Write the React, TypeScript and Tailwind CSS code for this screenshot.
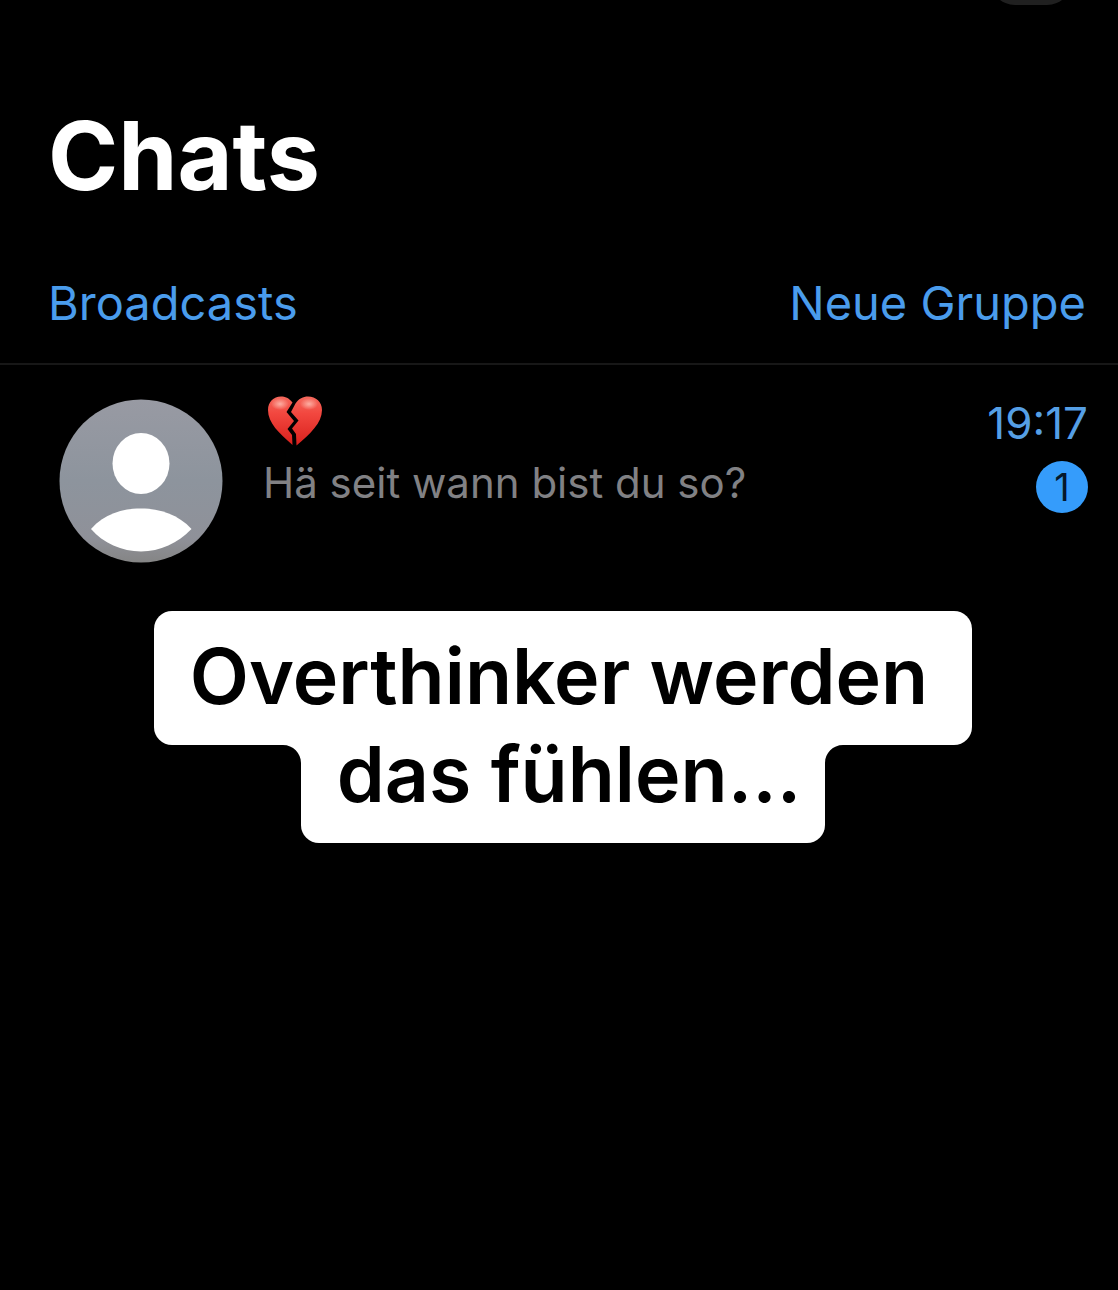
interface Chat {
  id: number;
  message: string;
  time: string;
  unread: number;
}

const chats: Chat[] = [
  { id: 1, message: 'Hä seit wann bist du so?', time: '19:17', unread: 1 },
];

function Avatar() {
  return (
    <svg viewBox="0 0 164 164" className="mt-1 h-41 w-41 shrink-0" aria-hidden="true">
      <defs>
        <linearGradient id="avatar-bg" x1="0" y1="0" x2="0" y2="1">
          <stop offset="0" stopColor="#989aa3" />
          <stop offset="0.5" stopColor="#8d949d" />
          <stop offset="0.85" stopColor="#8f9199" />
          <stop offset="1" stopColor="#858585" />
        </linearGradient>
      </defs>
      <circle cx="82" cy="82" r="81.5" fill="url(#avatar-bg)" />
      <ellipse cx="82" cy="64.5" rx="28.5" ry="30.5" fill="#fff" />
      <path d="M32 130C45 115 63 109.5 82 109.5C101 109.5 120 116 132.5 130C119 144 101 152.5 82 152.5C63 152.5 44 144 32 130Z" fill="#fff" />
    </svg>
  );
}

function BrokenHeart() {
  return (
    <svg viewBox="0 0 56 52" className="ml-1 h-13 w-14" aria-hidden="true">
      <defs>
        <linearGradient id="heart-fill" x1="0" y1="0" x2="0" y2="1">
          <stop offset="0" stopColor="#f5685c" />
          <stop offset="0.35" stopColor="#f2473f" />
          <stop offset="1" stopColor="#d9201c" />
        </linearGradient>
        <radialGradient id="heart-shine">
          <stop offset="0" stopColor="#ffc4b8" stopOpacity="0.8" />
          <stop offset="1" stopColor="#ffc4b8" stopOpacity="0" />
        </radialGradient>
      </defs>
      <path
        d="M25.5 7.5C22 3 18 1.5 14 1.5C6.5 1.5 1 7 1 15C1 28 12 38 25.5 50L25 40L20.5 34L27 26L19.5 17Z"
        fill="url(#heart-fill)"
      />
      <path
        d="M28.5 8.5C32 3.5 36 1.5 41 1.5C49 1.5 55 7 55 15C55 28 43 39 29.5 50.5L29 39L25 33.5L31.5 25.5L24 17Z"
        fill="url(#heart-fill)"
      />
      <ellipse cx="13" cy="9" rx="9" ry="6" fill="url(#heart-shine)" />
      <ellipse cx="42" cy="9" rx="9" ry="6" fill="url(#heart-shine)" />
    </svg>
  );
}

function ChatRow({ message, time, unread }: Chat) {
  return (
    <li className="flex items-start pt-[30px] pr-[30px] pl-[59px]">
      <Avatar />
      <div className="ml-10 min-w-0 flex-1">
        <BrokenHeart />
        <p className="mt-2 text-[42px] leading-[56px] text-[#818184]">{message}</p>
      </div>
      <div className="flex flex-col items-end">
        <time className="text-[44px] leading-[56px] text-[#559fe5]">{time}</time>
        <span className="mt-2.5 flex h-13 w-13 items-center justify-center rounded-full bg-[#359cfb] text-[38px] text-[#06182b]">
          {unread}
        </span>
      </div>
    </li>
  );
}

// Inverted corner that joins two caption lines of different width
function CaptionCorner({ flip = false }: { flip?: boolean }) {
  return (
    <svg viewBox="0 0 18 18" className={flip ? 'h-[18px] w-[18px] -scale-x-100' : 'h-[18px] w-[18px]'} aria-hidden="true">
      <path d="M0 0H18V18C18 8 10 0 0 0Z" fill="#fff" />
    </svg>
  );
}

function Caption() {
  return (
    <div className="mt-12 ml-2 flex flex-col items-center text-[77px] leading-[98px] font-semibold text-black">
      <p className="rounded-[18px] bg-white pt-4 pr-11 pb-5 pl-9 whitespace-nowrap">Overthinker werden</p>
      <div className="flex items-start">
        <CaptionCorner />
        <p className="-mt-5 rounded-b-[18px] bg-white pr-6 pb-5 pl-9 whitespace-nowrap">das fühlen...</p>
        <CaptionCorner flip />
      </div>
    </div>
  );
}

export default function App() {
  return (
    <main className="relative min-h-screen overflow-hidden bg-black font-['Inter',sans-serif]">
      <div className="absolute -top-[45px] right-[46px] h-[50px] w-[82px] rounded-full bg-[#202020]"></div>
      <header className="border-b-2 border-[#171717] pt-24 pr-8 pb-7 pl-12">
        <h1 className="text-[95px] leading-[120px] font-bold text-white">Chats</h1>
        <nav className="mt-[55px] flex justify-between text-[47px] leading-[64px] text-[#4a9cec]">
          <a href="#broadcasts">Broadcasts</a>
          <a href="#neue-gruppe">Neue Gruppe</a>
        </nav>
      </header>
      <ul>
        {chats.map((chat) => (
          <ChatRow key={chat.id} {...chat} />
        ))}
      </ul>
      <Caption />
    </main>
  );
}
